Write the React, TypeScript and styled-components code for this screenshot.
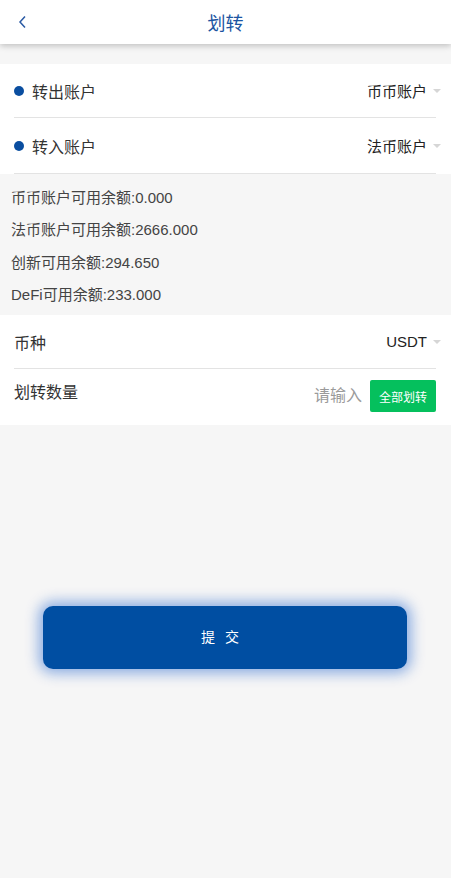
import React from "react";
import styled, { createGlobalStyle } from "styled-components";

const Global = createGlobalStyle`
  html, body { margin: 0; padding: 0; background: #f6f6f6; }
  body { font-family: "Liberation Sans", Arial, "Noto Sans CJK SC", sans-serif; }
  * { box-sizing: border-box; }
`;

const Page = styled.div`
  width: 451px;
  min-height: 878px;
  background: #f6f6f6;
  display: flex;
  flex-direction: column;
`;

const Header = styled.header`
  position: relative;
  height: 44px;
  background: #fff;
  box-shadow: 0 2px 6px rgba(0, 0, 0, 0.22);
  display: flex;
  align-items: center;
  justify-content: center;
  z-index: 1;
`;

const Back = styled.span`
  position: absolute;
  left: 16px;
  top: 14px;
  display: flex;
`;

const Title = styled.h1`
  margin: 0;
  font-size: 18px;
  font-weight: normal;
  color: #1b55a2;
`;

const Section = styled.section<{ $top?: number }>`
  background: #fff;
  margin-top: ${(p) => p.$top ?? 0}px;
  padding: 0 15px 0 14px;
`;

const Row = styled.div<{ $h: number; $divider?: boolean; $align?: string }>`
  height: ${(p) => p.$h}px;
  display: flex;
  align-items: ${(p) => p.$align ?? "center"};
  justify-content: space-between;
  border-bottom: ${(p) => (p.$divider ? "1px solid #e3e3e3" : "none")};
`;

const Left = styled.div`
  display: flex;
  align-items: center;
  gap: 8px;
  font-size: 16px;
  color: #333;
`;

const Dot = styled.span`
  width: 10px;
  height: 10px;
  border-radius: 50%;
  background: #0a4ea0;
`;

const Right = styled.div`
  display: flex;
  align-items: center;
  gap: 6px;
  font-size: 15px;
  color: #222;
  margin-right: -5px;
`;

const Caret = styled.span`
  width: 0;
  height: 0;
  border-left: 4px solid transparent;
  border-right: 4px solid transparent;
  border-top: 4px solid #d6d6d6;
  margin-top: 1px;
`;

const Balances = styled.div`
  padding: 6px 11px 5px;
  display: flex;
  flex-direction: column;
`;

const Balance = styled.div`
  height: 32.5px;
  display: flex;
  align-items: center;
  font-size: 15px;
  color: #444;
`;

const AmountLabel = styled.div`
  padding-top: 10px;
  font-size: 16px;
  color: #333;
`;

const InputWrap = styled.div`
  display: flex;
  align-items: center;
  gap: 8px;
  padding-top: 11px;
`;

const Input = styled.input`
  width: 56px;
  border: none;
  outline: none;
  background: transparent;
  font-size: 16px;
  text-align: right;
  padding: 0;
  font-family: inherit;
  color: #333;
  &::placeholder { color: #9a9a9a; }
`;

const AllBtn = styled.button`
  width: 66px;
  height: 32px;
  border: none;
  border-radius: 2px;
  background: #05c05d;
  color: #fff;
  font-size: 12px;
  font-family: inherit;
  padding: 0;
`;

const SubmitWrap = styled.div`
  padding: 181px 44px 0 43px;
`;

const Submit = styled.button`
  width: 364px;
  height: 63px;
  border: none;
  border-radius: 10px;
  background: #004ea2;
  color: #fff;
  font-size: 14px;
  letter-spacing: 10px;
  font-family: inherit;
  box-shadow: 0 0 14px 4px rgba(0, 78, 200, 0.45);
  padding: 0 0 3px 0;
`;

export default function App() {
  return (
    <Page>
      <Global />
      <Header>
        <Back>
          <svg width="12" height="16" viewBox="0 0 12 16" fill="none">
            <path d="M9 2.5 L4 8 L9 13.5" stroke="#2a5aa4" strokeWidth="1.5" strokeLinejoin="miter" />
          </svg>
        </Back>
        <Title>划转</Title>
      </Header>
      <Section $top={20}>
        <Row $h={54} $divider>
          <Left><Dot />转出账户</Left>
          <Right>币币账户<Caret /></Right>
        </Row>
        <Row $h={56} $divider>
          <Left><Dot />转入账户</Left>
          <Right>法币账户<Caret /></Right>
        </Row>
      </Section>
      <Balances>
        <Balance>币币账户可用余额:0.000</Balance>
        <Balance>法币账户可用余额:2666.000</Balance>
        <Balance>创新可用余额:294.650</Balance>
        <Balance>DeFi可用余额:233.000</Balance>
      </Balances>
      <Section>
        <Row $h={54} $divider>
          <Left>币种</Left>
          <Right>USDT<Caret /></Right>
        </Row>
        <Row $h={56} $align="flex-start">
          <AmountLabel>划转数量</AmountLabel>
          <InputWrap>
            <Input placeholder="请输入" />
            <AllBtn>全部划转</AllBtn>
          </InputWrap>
        </Row>
      </Section>
      <SubmitWrap>
        <Submit>提交</Submit>
      </SubmitWrap>
    </Page>
  );
}
